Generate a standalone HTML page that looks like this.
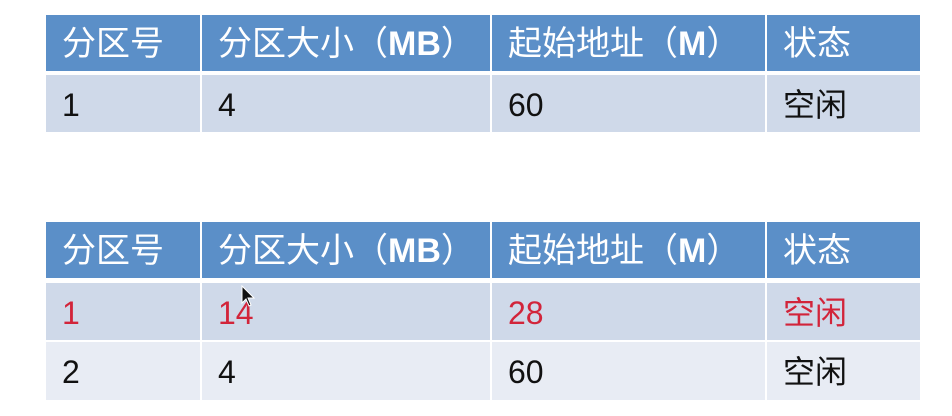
<!DOCTYPE html><html><head><meta charset="utf-8"><style>
body{margin:0;width:952px;height:416px;background:#fff;position:relative;overflow:hidden;font-family:"Liberation Sans","Noto Sans CJK SC",sans-serif}
.r{position:absolute;left:46px;width:874px;height:57px}
.c{position:absolute;top:0;height:100%;line-height:60px;padding-left:16px;box-sizing:border-box;font-size:32px;color:#111}
.h{background:#5b8fc8}.h .c{color:#fff;font-size:34px;line-height:58px}
.a{background:#cfd9e9}.b{background:#e8ecf4}
.c1{left:0;width:154px}.c2{left:156px;width:288px}.c3{left:446px;width:273px}.c4{left:721px;width:153px}
.c2,.c3,.c4{border-left:2px solid #fff;margin-left:-2px}
.red .c{color:#d2243a}
</style></head><body>
<div class="r h" style="top:15px;height:56px"><div class="c c1">分区号</div><div class="c c2">分区大小（<b>MB</b>）</div><div class="c c3">起始地址（<b>M</b>）</div><div class="c c4">状态</div></div>
<div class="r a" style="top:75px"><div class="c c1">1</div><div class="c c2">4</div><div class="c c3">60</div><div class="c c4">空闲</div></div>
<div class="r h" style="top:222px;height:56px"><div class="c c1">分区号</div><div class="c c2">分区大小（<b>MB</b>）</div><div class="c c3">起始地址（<b>M</b>）</div><div class="c c4">状态</div></div>
<div class="r a red" style="top:283px"><div class="c c1">1</div><div class="c c2">14</div><div class="c c3">28</div><div class="c c4">空闲</div></div>
<div class="r b" style="top:342px;height:58px"><div class="c c1">2</div><div class="c c2">4</div><div class="c c3">60</div><div class="c c4">空闲</div></div>
<svg style="position:absolute;left:241px;top:285px" width="16" height="24" viewBox="0 0 16 24"><path d="M1 1 L1 18 L5 14 L8 21 L10 20 L7 13 L13 13 Z" fill="#111" stroke="#fff" stroke-width="1"/></svg>
</body></html>
